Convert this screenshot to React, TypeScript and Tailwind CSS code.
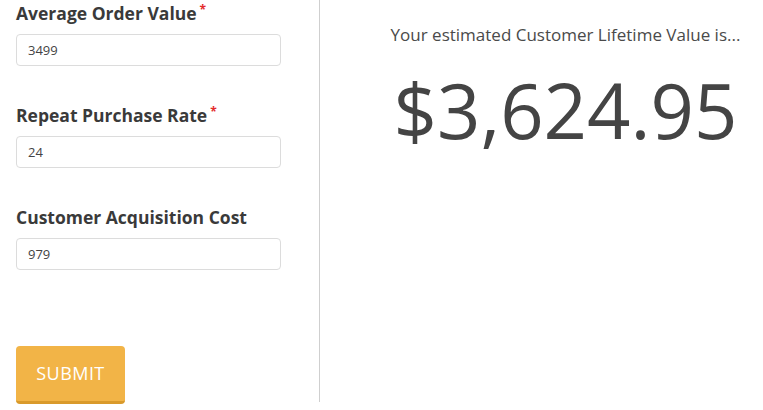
const font = { fontFamily: "'Open Sans', Lato, sans-serif" };

function Field({ label, value, required }: { label: string; value: string; required?: boolean }) {
  return (
    <div className="flex flex-col">
      <label className="text-[17.5px] font-bold leading-[24px] text-[#3a3a3a]">
        {label}
        {required && <sup className="ml-[3px] text-[12px] font-bold text-[#e32b2b]">*</sup>}
      </label>
      <input
        readOnly
        value={value}
        className="mt-[9px] h-[32px] w-[265px] rounded-[4px] border border-[#dcdcdc] px-[11px] text-[13px] text-[#444] outline-none"
      />
    </div>
  );
}

export default function App() {
  return (
    <div className="flex h-[410px] w-[763px] bg-white" style={font}>
      {/* Form */}
      <div className="flex h-[402px] w-[320px] flex-col border-r border-[#cfcfcf] pl-4 pt-[1px]">
        <Field label="Average Order Value" value="3499" required />
        <div className="mt-[37px]">
          <Field label="Repeat Purchase Rate" value="24" required />
        </div>
        <div className="mt-[37px]">
          <Field label="Customer Acquisition Cost" value="979" />
        </div>
        <button className="mt-[76px] h-[58px] w-[109px] shrink-0 rounded-[4px] border-b-[3px] border-[#d99a2b] bg-[#f2b447] text-[18px] tracking-wide text-white">
          SUBMIT
        </button>
      </div>

      {/* Result */}
      <div className="flex flex-1 flex-col items-center pl-[48px] pt-[22px]">
        <p className="text-[17px] text-[#4a4a4a]">Your estimated Customer Lifetime Value is...</p>
        <p className="mt-[18px] text-[76px] font-normal leading-[88px] text-[#444]">$3,624.95</p>
      </div>
    </div>
  );
}
